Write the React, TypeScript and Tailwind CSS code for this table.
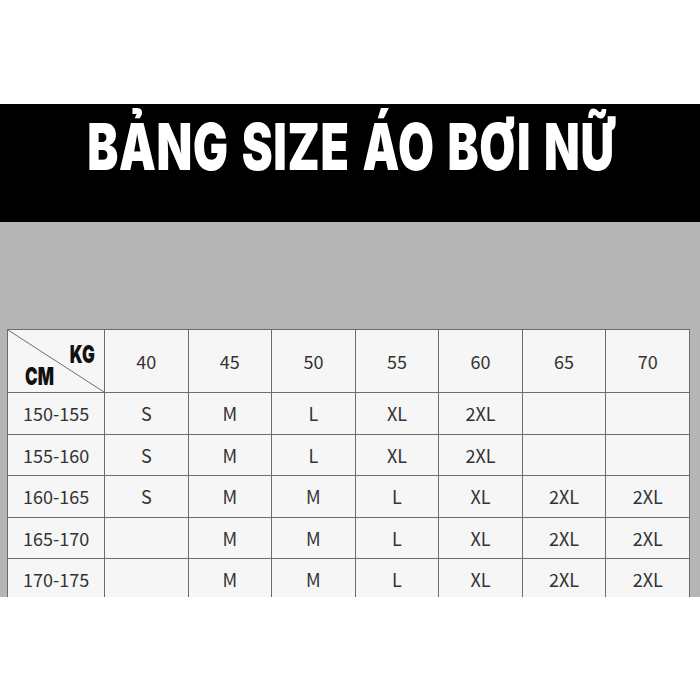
const HEADERS = ['40', '45', '50', '55', '60', '65', '70']

const ROWS: { cm: string; sizes: string[] }[] = [
  { cm: '150-155', sizes: ['S', 'M', 'L', 'XL', '2XL', '', ''] },
  { cm: '155-160', sizes: ['S', 'M', 'L', 'XL', '2XL', '', ''] },
  { cm: '160-165', sizes: ['S', 'M', 'M', 'L', 'XL', '2XL', '2XL'] },
  { cm: '165-170', sizes: ['', 'M', 'M', 'L', 'XL', '2XL', '2XL'] },
  { cm: '170-175', sizes: ['', 'M', 'M', 'L', 'XL', '2XL', '2XL'] },
]

const ROW_H = ['h-[42px]', 'h-[41px]', 'h-[42px]', 'h-[41px]', 'h-[42px]']

const heavy = { fontFamily: 'Inter, "DejaVu Sans", sans-serif' }

export default function App() {
  return (
    <div className="w-[700px] h-[700px] bg-white overflow-hidden" style={{ fontFamily: '"Noto Sans CJK SC", "Noto Sans", sans-serif' }}>
      <div className="h-[104px]" />

      {/* Title band */}
      <div className="h-[118px] bg-black flex justify-center overflow-hidden">
        <h1
          className="mt-[10px] whitespace-nowrap text-white text-[65px] leading-[65px] font-black tracking-[1px] [word-spacing:4px] scale-x-[0.715] origin-center translate-x-[1px]"
          style={heavy}
        >
          BẢNG SIZE ÁO BƠI NỮ
        </h1>
      </div>

      {/* Gray area with table */}
      <div className="h-[375px] bg-[#b5b5b5] pt-[107px] pl-[7px] pr-[10px] overflow-hidden">
        <table className="w-[683px] border-collapse table-fixed bg-[#f6f6f6] text-[#333] text-[18px]">
          <colgroup>
            <col className="w-[97px]" />
            {HEADERS.map(h => <col key={h} />)}
          </colgroup>
          <thead>
            <tr className="h-[62px]">
              <th className="relative border border-[#6c6c6c] p-0 font-normal">
                <svg className="absolute inset-0 w-full h-full" viewBox="0 0 97 62" preserveAspectRatio="none">
                  <line x1="0" y1="0" x2="97" y2="62" stroke="#6c6c6c" strokeWidth="1" />
                </svg>
                <div
                  className="relative h-[62px] flex flex-col justify-between pt-[15px] pb-[6px] pl-[17px] pr-[9px] text-[#111] text-[25px] leading-[19px] font-black"
                  style={heavy}
                >
                  <span className="self-end inline-block scale-x-[0.68] origin-right">KG</span>
                  <span className="self-start inline-block scale-x-[0.68] origin-left">CM</span>
                </div>
              </th>
              {HEADERS.map(h => (
                <th key={h} className="border border-[#6c6c6c] font-normal text-center">{h}</th>
              ))}
            </tr>
          </thead>
          <tbody>
            {ROWS.map((r, i) => (
              <tr key={r.cm} className={ROW_H[i]}>
                <td className="border border-[#6c6c6c] pl-[15px]">{r.cm}</td>
                {r.sizes.map((s, j) => (
                  <td key={j} className="border border-[#6c6c6c] text-center">{s}</td>
                ))}
              </tr>
            ))}
          </tbody>
        </table>
      </div>
    </div>
  )
}
